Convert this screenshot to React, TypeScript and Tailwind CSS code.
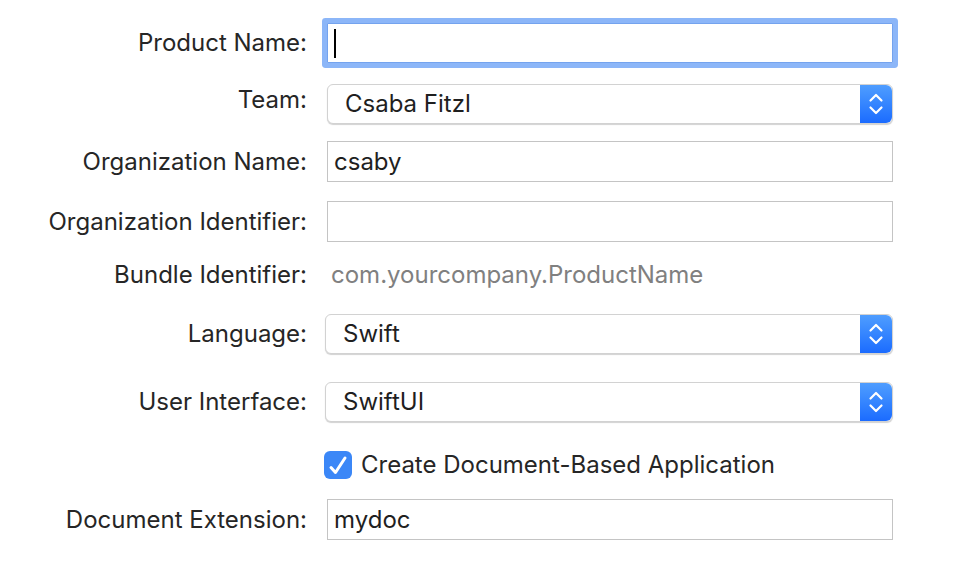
import React from 'react'

const font = { fontFamily: 'Inter, "Noto Sans", sans-serif' }

const Stepper: React.FC = () => (
  <div className="flex h-full w-[32px] shrink-0 items-center justify-center rounded-r-[6px] bg-gradient-to-b from-[#4f9dff] to-[#1b6bff]">
    <svg width="16" height="26" viewBox="0 0 16 26" fill="none">
      <path d="M2.5 9.5 L8 4 L13.5 9.5" stroke="white" strokeWidth="2.2" strokeLinecap="round" strokeLinejoin="round" />
      <path d="M2.5 16.5 L8 22 L13.5 16.5" stroke="white" strokeWidth="2.2" strokeLinecap="round" strokeLinejoin="round" />
    </svg>
  </div>
)

const Select: React.FC<{ value: string; className?: string }> = ({ value, className }) => (
  <div className={`flex h-[40px] items-stretch rounded-[6px] border border-[#d2d2d2] bg-white shadow-[0_1px_1px_rgba(0,0,0,0.18)] ${className ?? ''}`}>
    <div className="flex flex-1 items-center pl-[17px] text-[24px] text-[#1f1f1f]">{value}</div>
    <Stepper />
  </div>
)

const TextField: React.FC<{ value?: string }> = ({ value }) => (
  <div className="flex h-[41px] w-[566px] items-center border border-[#c4c4c4] bg-white pl-[6px] text-[24px] text-[#1f1f1f]">
    {value}
  </div>
)

const Row: React.FC<{ label: string; className?: string; labelClass?: string; children: React.ReactNode }> = ({
  label,
  className,
  labelClass,
  children,
}) => (
  <div className={`flex items-center ${className ?? ''}`}>
    <div className={`w-[307px] shrink-0 text-right text-[24px] leading-[28px] text-[#262626] ${labelClass ?? ''}`}>{label}</div>
    <div className="ml-[20px] flex items-center">{children}</div>
  </div>
)

const App: React.FC = () => {
  return (
    <div className="h-[562px] w-[962px] overflow-hidden bg-white pt-[23px]" style={font}>
      <Row label="Product Name:">
        <div className="flex h-[40px] w-[566px] items-center rounded-[1px] border border-[#74a3ee] bg-white pl-[6px] shadow-[0_0_0_5px_#8cb6f8]">
          <div className="h-[29px] w-[2px] bg-black" />
        </div>
      </Row>

      <Row label="Team:" className="mt-[21px]" labelClass="pb-[9px]">
        <Select value="Csaba Fitzl" className="w-[566px]" />
      </Row>

      <Row label="Organization Name:" className="mt-[17px]">
        <TextField value="csaby" />
      </Row>

      <Row label="Organization Identifier:" className="mt-[19px]">
        <TextField />
      </Row>

      <Row label="Bundle Identifier:" className="mt-[21px] h-[24px]">
        <span className="pl-[4px] text-[24px] leading-[28px] text-[#808080]">com.yourcompany.ProductName</span>
      </Row>

      <Row label="Language:" className="mt-[27px]">
        <Select value="Swift" className="-ml-[2px] w-[568px]" />
      </Row>

      <Row label="User Interface:" className="mt-[28px]">
        <Select value="SwiftUI" className="-ml-[2px] w-[568px]" />
      </Row>

      <div className="mt-[29px] flex h-[28px] items-center pl-[324px]">
        <div className="flex h-[28px] w-[28px] items-center justify-center rounded-[6px] bg-[#3b87f7]">
          <svg width="28" height="28" viewBox="0 0 28 28" fill="none">
            <path d="M7 16.5 L11.5 21.5 L21 7" stroke="white" strokeWidth="3" strokeLinecap="round" strokeLinejoin="round" />
          </svg>
        </div>
        <span className="ml-[9px] text-[24px] leading-[28px] text-[#262626]">Create Document-Based Application</span>
      </div>

      <Row label="Document Extension:" className="mt-[20px]">
        <TextField value="mydoc" />
      </Row>
    </div>
  )
}

export default App
